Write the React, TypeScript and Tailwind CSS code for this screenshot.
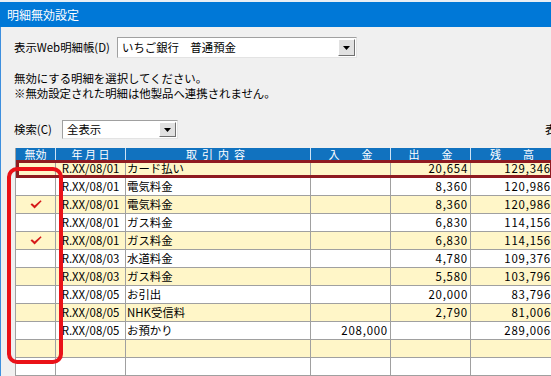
import React from "react"

type Row = {
  checked?: boolean
  date?: string
  desc?: string
  inAmt?: string
  outAmt?: string
  balance?: string
}

const rows: Row[] = [
  { date: "R.XX/08/01", desc: "カード払い", outAmt: "20,654", balance: "129,346" },
  { date: "R.XX/08/01", desc: "電気料金", outAmt: "8,360", balance: "120,986" },
  { checked: true, date: "R.XX/08/01", desc: "電気料金", outAmt: "8,360", balance: "120,986" },
  { date: "R.XX/08/01", desc: "ガス料金", outAmt: "6,830", balance: "114,156" },
  { checked: true, date: "R.XX/08/01", desc: "ガス料金", outAmt: "6,830", balance: "114,156" },
  { date: "R.XX/08/03", desc: "水道料金", outAmt: "4,780", balance: "109,376" },
  { date: "R.XX/08/03", desc: "ガス料金", outAmt: "5,580", balance: "103,796" },
  { date: "R.XX/08/05", desc: "お引出", outAmt: "20,000", balance: "83,796" },
  { date: "R.XX/08/05", desc: "NHK受信料", outAmt: "2,790", balance: "81,006" },
  { date: "R.XX/08/05", desc: "お預かり", inAmt: "208,000", balance: "289,006" },
  {},
  {},
  {},
]

function DropArrow() {
  return (
    <div className="w-[17px] h-full bg-[#e1e1e1] border border-t-white border-l-white border-r-[#707070] border-b-[#707070] flex items-center justify-center">
      <svg width="7" height="4" viewBox="0 0 7 4">
        <path d="M0 0 H7 L3.5 4 Z" fill="#000" />
      </svg>
    </div>
  )
}

function Check() {
  return (
    <svg width="12" height="9" viewBox="0 0 12 9">
      <path d="M0.5 4.6 L2 3.2 L4.6 5.4 L10.6 0.2 L11.6 1.2 L4.6 8.4 Z" fill="#d61a1a" />
    </svg>
  )
}

export default function App() {
  return (
    <div
      className="relative w-[551px] h-[376px] overflow-hidden bg-[#f0f0f0] text-black"
      style={{ fontFamily: '"Noto Sans CJK JP", "Noto Sans", sans-serif' }}
    >
      <div className="h-[2px] bg-[#e9eef4]" />
      <div className="h-[25px] bg-[#0078d7] text-white text-[12px] pl-[7px] flex items-center">
        明細無効設定
      </div>

      <div className="h-[349px] border-l border-[#3d8fde] text-[11.4px]">
        {/* 表示Web明細帳 */}
        <div className="flex items-center pl-[13px] pt-[10px]">
          <span className="w-[103px] shrink-0 leading-none">表示Web明細帳(D)</span>
          <div className="w-[240px] shrink-0 h-[21px] bg-white border border-t-[#a0a0a0] border-l-[#a0a0a0] border-r-[#e3e3e3] border-b-[#e3e3e3] flex items-center justify-between pl-[4px] pr-[1px] py-[1px]">
            <span className="leading-none">いちご銀行　普通預金</span>
            <DropArrow />
          </div>
        </div>

        {/* message */}
        <div className="pl-[13px] mt-[13px] leading-[15px]">
          <div>無効にする明細を選択してください。</div>
          <div>※無効設定された明細は他製品へ連携されません。</div>
        </div>

        {/* 検索 */}
        <div className="flex items-center pl-[13px] mt-[19px] whitespace-nowrap">
          <span className="w-[48px] shrink-0 leading-none">検索(C)</span>
          <div className="shrink-0 w-[116px] h-[19px] bg-white border border-t-[#a0a0a0] border-l-[#a0a0a0] border-r-[#e3e3e3] border-b-[#e3e3e3] flex items-center justify-between pl-[4px] pr-[1px] py-[1px]">
            <span className="leading-none">全表示</span>
            <DropArrow />
          </div>
          <span className="shrink-0 ml-[367px] leading-none">表示件数</span>
        </div>

        {/* grid */}
        <div className="mt-[9px] ml-[14px] w-[538px] border-l border-[#a0a0a0]">
          <div className="flex h-[12px] bg-[#1172bf] text-white text-[11px] leading-[12px]">
            <div className="w-[40px] shrink-0 border-r border-[#cfe3f5] text-center">無効</div>
            <div className="w-[70px] shrink-0 border-r border-[#cfe3f5] text-center">年 月 日</div>
            <div className="w-[185px] shrink-0 border-r border-[#cfe3f5] text-center tracking-[5px]">取引内容</div>
            <div className="w-[80px] shrink-0 border-r border-[#cfe3f5] text-center">入　　金</div>
            <div className="w-[80px] shrink-0 border-r border-[#cfe3f5] text-center">出　　金</div>
            <div className="w-[82px] shrink-0 text-center">残　　高</div>
          </div>

          {rows.map((r, i) => (
            <div
              key={i}
              className={
                "relative flex h-[18px] border-b border-[#a0a0a0] leading-[17px] " +
                (i % 2 === 0 ? "bg-[#fff6c8]" : "bg-white")
              }
            >
              <div className="w-[40px] shrink-0 border-r border-[#a0a0a0] flex items-center justify-center">
                {r.checked && <Check />}
              </div>
              <div className="w-[70px] shrink-0 border-r border-[#a0a0a0] text-center">{r.date}</div>
              <div className="w-[185px] shrink-0 border-r border-[#a0a0a0] pl-[1px]">{r.desc}</div>
              <div className="w-[80px] shrink-0 border-r border-[#a0a0a0] text-right pr-[2px] tracking-[0.8px]">{r.inAmt}</div>
              <div className="w-[80px] shrink-0 border-r border-[#a0a0a0] text-right pr-[2px] tracking-[0.8px]">{r.outAmt}</div>
              <div className="w-[82px] shrink-0 text-right pr-[2px] tracking-[0.8px]">{r.balance}</div>
              {i === 0 && (
                <div className="absolute inset-0 -bottom-px border-[3px] border-[#8f1b20] pointer-events-none" />
              )}
            </div>
          ))}
        </div>
      </div>

      {/* red annotation around the 無効 column */}
      <div className="absolute left-[7px] top-[167px] w-[56px] h-[197px] border-[4px] border-[#ea1218] rounded-[10px] pointer-events-none" />
    </div>
  )
}
